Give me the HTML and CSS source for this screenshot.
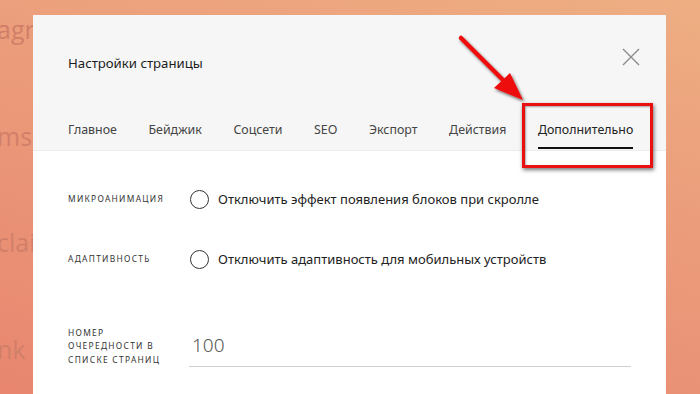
FILE: index.html
```html
<!DOCTYPE html>
<html lang="ru">
<head>
  <meta charset="UTF-8" />
  <meta name="viewport" content="width=device-width, initial-scale=1.0"/>
  <title>Настройки страницы</title>
  <link rel="stylesheet" href="styles.css">
</head>
<body>

  <div class="page-bg">
    <p class="bg-line">agr</p>
    <p class="bg-line">ms c</p>
    <p class="bg-line">clai</p>
    <p class="bg-line">nk p</p>
  </div>

  <div class="modal">
    <div class="modal-head">
      <h2 class="modal-title">Настройки страницы</h2>
      <button class="close-btn" aria-label="Закрыть">
        <svg width="18" height="18" viewBox="0 0 18 18"><path d="M1 1L17 17M17 1L1 17" stroke="#8c8c8c" stroke-width="1.4" fill="none"/></svg>
      </button>
      <div class="tabs">
        <span class="tab">Главное</span>
        <span class="tab">Бейджик</span>
        <span class="tab">Соцсети</span>
        <span class="tab">SEO</span>
        <span class="tab">Экспорт</span>
        <span class="tab">Действия</span>
        <span class="tab active">Дополнительно</span>
      </div>
    </div>

    <div class="modal-body">
      <div class="row">
        <div class="label">Микроанимация</div>
        <label class="check"><span class="radio"></span>Отключить эффект появления блоков при скролле</label>
      </div>
      <div class="row">
        <div class="label">Адаптивность</div>
        <label class="check"><span class="radio"></span>Отключить адаптивность для мобильных устройств</label>
      </div>
      <div class="row row-input">
        <div class="label"><span class="label-text">Номер очередности в списке страниц</span></div>
        <div class="field">100</div>
      </div>
    </div>
  </div>

  <div class="highlight"></div>
  <svg class="arrow" width="90" height="90" viewBox="0 0 90 90">
    <defs>
      <filter id="sh" x="-20%" y="-20%" width="140%" height="140%">
        <feDropShadow dx="1.5" dy="2" stdDeviation="1.5" flood-color="#000" flood-opacity="0.55"/>
      </filter>
    </defs>
    <g filter="url(#sh)">
      <path d="M8 7L52 51" stroke="#ee0d0d" stroke-width="4.5" stroke-linecap="round"/>
      <path d="M70 69L41 57L57 42Z" fill="#ee0d0d"/>
    </g>
  </svg>

</body>
</html>
```

FILE: styles.css
```css
* {
  box-sizing: border-box;
}
html, body {
  margin: 0;
  width: 700px;
  height: 394px;
  overflow: hidden;
}
body {
  position: relative;
  font-family: "Noto Sans", "Open Sans", sans-serif;
  color: #222;
  background: linear-gradient(15deg, #e8866f 0%, #eb9a7a 55%, #eeae82 100%);
}
.page-bg {
  padding-top: 15px;
}
.bg-line {
  margin: 0 0 78.7px -3px;
  height: 28px;
  font-family: "Open Sans", sans-serif;
  font-size: 25px;
  line-height: 28px;
  color: #d27f6a;
}
.modal {
  position: absolute;
  left: 33px;
  top: 15px;
  width: 633px;
  height: 400px;
  background: #fff;
}
.modal-head {
  position: relative;
  background: #f6f6f6;
  border-bottom: 1px solid #ececec;
  padding: 38px 35px 0;
  height: 136px;
}
.modal-title {
  margin: 0;
  font-size: 13.2px;
  font-weight: 400;
  line-height: 20px;
  color: #1c1c1c;
}
.close-btn {
  position: absolute;
  right: 26px;
  top: 33px;
  padding: 0;
  border: none;
  background: none;
  width: 18px;
  height: 18px;
}
.close-btn svg {
  display: block;
}
.tabs {
  display: flex;
  gap: 31.6px;
  margin-top: 47px;
}
.tab {
  font-size: 12.4px;
  line-height: 20px;
  color: #444;
  padding-bottom: 7px;
  border-bottom: 2px solid transparent;
}
.tab.active {
  color: #222;
  border-bottom-color: #111;
}
.modal-body {
  padding: 38px 35px 0;
}
.row {
  display: flex;
  align-items: center;
  height: 20px;
  margin-bottom: 40px;
}
.label {
  width: 122px;
  flex-shrink: 0;
  font-size: 8.4px;
  letter-spacing: 1.3px;
  text-transform: uppercase;
  color: #333;
  line-height: 13.5px;
}
.label-text {
  display: block;
  width: 104px;
}
.check {
  display: flex;
  align-items: center;
  font-size: 13px;
  color: #222;
}
.radio {
  width: 19px;
  height: 19px;
  border: 1.5px solid #333;
  border-radius: 50%;
  margin-right: 9px;
}
.row-input {
  margin-top: 56px;
  height: 42px;
}
.field {
  flex: 1;
  height: 42px;
  margin-left: -1px;
  font-size: 19px;
  font-weight: 300;
  line-height: 40px;
  color: #555;
  padding-left: 3px;
  border-bottom: 1.5px solid #cfcfcf;
}
.highlight {
  position: absolute;
  left: 522px;
  top: 103px;
  width: 131px;
  height: 65px;
  border: 3px solid #ea1010;
  box-shadow: 1px 2px 4px rgba(0, 0, 0, 0.55), inset 1px 1px 2px rgba(0, 0, 0, 0.35);
}
.arrow {
  position: absolute;
  left: 453px;
  top: 31px;
}
```
